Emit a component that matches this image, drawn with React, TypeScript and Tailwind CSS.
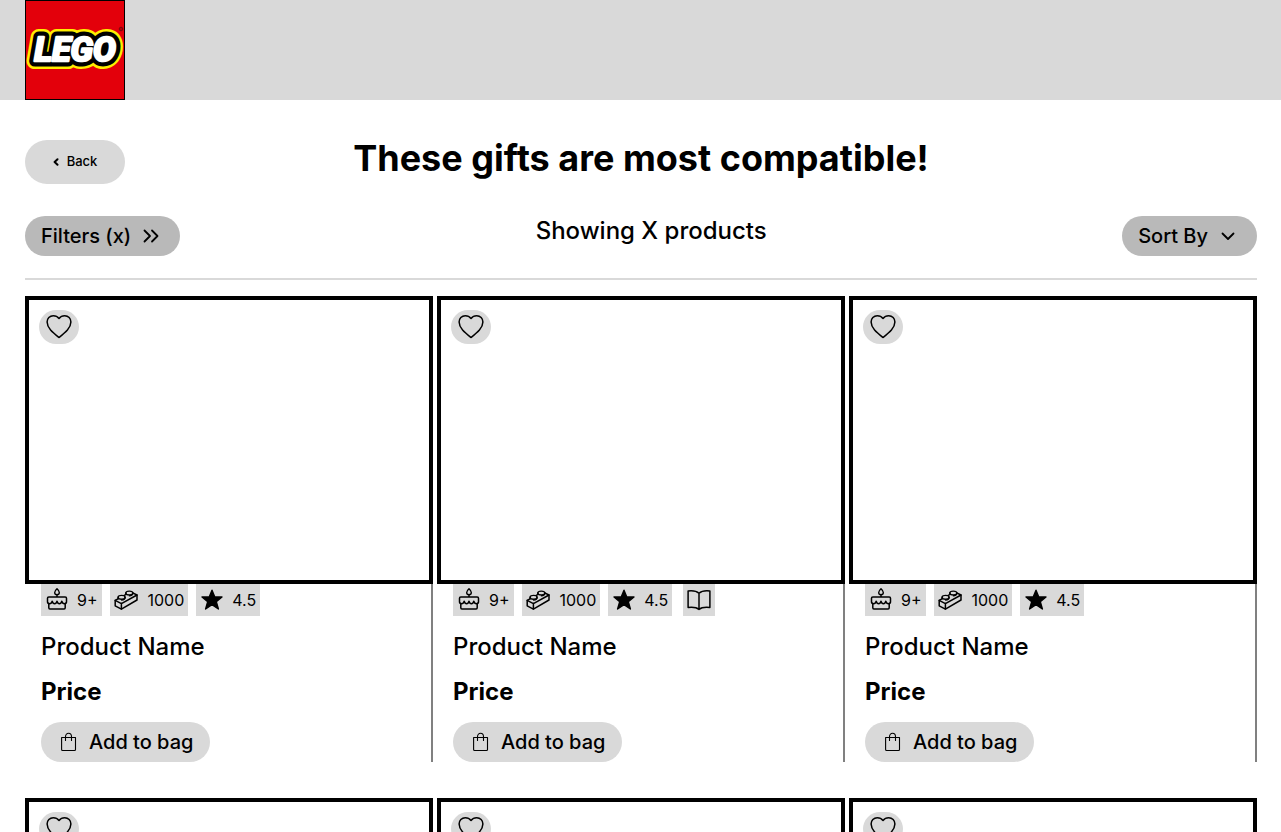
import React from "react";

type Product = { id: number; hasBook?: boolean };

const products: Product[] = [
  { id: 1 },
  { id: 2, hasBook: true },
  { id: 3 },
  { id: 4 },
  { id: 5, hasBook: true },
  { id: 6 },
];

function Logo() {
  const letters = {
    x: 50,
    y: 61,
    textAnchor: "middle" as const,
    strokeLinejoin: "round" as const,
    fontSize: 34,
    fontWeight: 700,
    fontStyle: "italic",
    fontFamily: "Roboto, sans-serif",
  };
  return (
    <svg viewBox="0 0 100 100" className="block size-[100px]" role="img" aria-label="LEGO">
      <rect width="100" height="100" fill="#000" />
      <rect x="1" y="1" width="98" height="98" fill="#e3000b" />
      <text {...letters} stroke="#ffed00" strokeWidth="16" fill="#ffed00">LEGO</text>
      <text {...letters} stroke="#000" strokeWidth="11" fill="#000">LEGO</text>
      <text {...letters} stroke="#fff" strokeWidth="2.6" fill="#fff">LEGO</text>
      <circle cx="96" cy="29" r="1.8" fill="none" stroke="#5c0508" strokeWidth="0.8" />
      <circle cx="96" cy="29" r="0.7" fill="#5c0508" />
    </svg>
  );
}

const line = {
  fill: "none",
  stroke: "currentColor",
  strokeLinecap: "round" as const,
  strokeLinejoin: "round" as const,
  "aria-hidden": true,
};

function HeartIcon() {
  return (
    <svg viewBox="0 0 26 24" className="h-6 w-[26px]" {...line} strokeWidth="1.5">
      <path d="M13 3.5C11.6 1.7 9.6 0.8 7.3 0.8C3.7 0.8 1.1 3.5 1.1 7.1C1.1 12.9 6.6 17.3 13 22.5C19.4 17.3 24.9 12.9 24.9 7.1C24.9 3.5 22.3 0.8 18.7 0.8C16.4 0.8 14.4 1.7 13 3.5Z" />
    </svg>
  );
}

function CakeIcon() {
  return (
    <svg viewBox="0 0 24 24" className="size-6" {...line} strokeWidth="1.5">
      <path d="M12 0.8C10.5 2.2 9.7 3.2 9.7 4.4C9.7 5.7 10.7 6.6 12 6.6S14.3 5.7 14.3 4.4C14.3 3.2 13.5 2.2 12 0.8Z" strokeWidth="1.4" />
      <path d="M12 6.6V9M3.8 9H20.2C21 9 21.5 9.5 21.5 10.3V13.8C21.5 15 20.7 15.7 19.5 15.7C18.2 15.7 17.3 15 16.8 13.2C16.3 15 15.5 15.7 14.4 15.7S12.5 15 12 13.2C11.5 15 10.7 15.7 9.6 15.7S7.7 15 7.2 13.2C6.7 15 5.8 15.7 4.5 15.7C3.3 15.7 2.5 15 2.5 13.8V10.3C2.5 9.5 3 9 3.8 9Z" />
      <path d="M3.8 15.6V19.8C3.8 20.5 4.2 20.9 4.9 20.9H19.1C19.8 20.9 20.2 20.5 20.2 19.8V15.6" />
    </svg>
  );
}

function BrickIcon() {
  return (
    <svg viewBox="0 0 26 24" className="h-6 w-[26px]" {...line} strokeWidth="1.5">
      <path d="M1.2 12.4L16.6 3.8L23 7V12L7.4 21.1L1.2 17.8Z" />
      <path d="M1.2 12.4L7.4 15.6L23 7M7.4 15.6V21.1" />
      <g className="fill-[#d9d9d9]" strokeWidth="1.4">
        <path d="M4.2 8.8V10.3C4.2 11.3 5.6 12.1 7.6 12.1S11 11.3 11 10.3V8.8" stroke="none" />
        <path d="M11.9 4.5V6C11.9 7 13.3 7.8 15.3 7.8S18.7 7 18.7 6V4.5" stroke="none" />
        <ellipse cx="7.6" cy="9.3" rx="3.5" ry="1.9" />
        <ellipse cx="15.3" cy="5" rx="3.5" ry="1.9" />
        <path d="M4.1 9.3V10.7M11.1 9.3C11.1 11.2 9.6 12 7.6 12M11.8 5V6.4M18.8 5C18.8 6.9 17.3 7.7 15.3 7.7" fill="none" />
      </g>
    </svg>
  );
}

function StarIcon() {
  return (
    <svg viewBox="0 0 24 24" className="size-6" fill="currentColor" aria-hidden>
      <path
        d="M12 2.2L14.8 9H22L16.3 13.6L18.4 21L12 16.7L5.6 21L7.7 13.6L2 9H9.2Z"
        stroke="currentColor"
        strokeWidth="1.4"
        strokeLinejoin="round"
      />
    </svg>
  );
}

function BookIcon() {
  return (
    <svg viewBox="0 0 24 24" className="size-6" {...line} strokeWidth="1.5">
      <path d="M12 5.2C9.7 3.1 5.4 2.4 1.1 2.9V19.4C5.4 18.9 9.7 19.4 12 21.4C14.3 19.4 18.6 18.9 22.9 19.4V2.9C18.6 2.4 14.3 3.1 12 5.2ZM12 5.2V21.4" />
    </svg>
  );
}

function BagIcon() {
  return (
    <svg viewBox="0 0 24 24" className="size-6" {...line} strokeWidth="1.1">
      <path d="M4.6 7.5H18.5V19.5C18.5 20 18.1 20.5 17.5 20.5H5.6C5 20.5 4.6 20 4.6 19.5Z" />
      <path d="M8.5 10.5V6.7C8.5 4.7 9.8 3.3 11.5 3.3S14.5 4.7 14.5 6.7V10.5" />
    </svg>
  );
}

function Chip({ icon, label }: { icon: React.ReactNode; label: string }) {
  return (
    <li className="flex h-8 items-center gap-2 bg-[#d9d9d9] px-1">
      {icon}
      <span>{label}</span>
    </li>
  );
}

function ProductCard({ product }: { product: Product }) {
  return (
    <article>
      <div className="h-72 border-4 border-black p-[10px]">
        <button
          type="button"
          aria-label="Add to wishlist"
          className="flex h-[34px] w-10 items-center justify-center rounded-full bg-[#d9d9d9]"
        >
          <HeartIcon />
        </button>
      </div>
      <div className="flex flex-col items-start gap-4 border-r-2 border-[#808080] pl-4">
        <ul className="flex gap-2 text-base">
          <Chip icon={<CakeIcon />} label="9+" />
          <Chip icon={<BrickIcon />} label="1000" />
          <Chip icon={<StarIcon />} label="4.5" />
          {product.hasBook && (
            <li className="ml-[3px] flex h-8 items-center bg-[#d9d9d9] px-1">
              <BookIcon />
            </li>
          )}
        </ul>
        <h2 className="text-2xl leading-[29px] font-medium">Product Name</h2>
        <p className="text-2xl leading-[29px] font-bold">Price</p>
        <button
          type="button"
          className="flex h-10 items-center gap-2 rounded-full bg-[#d9d9d9] pr-[17px] pl-4 text-xl font-medium"
        >
          <BagIcon />
          Add to bag
        </button>
      </div>
    </article>
  );
}

export default function App() {
  return (
    <div className="min-h-screen bg-white font-['Inter',sans-serif] text-black">
      <header className="bg-[#d9d9d9] pr-6 pl-[25px]">
        <a href="#" className="inline-block align-top">
          <Logo />
        </a>
      </header>
      <main className="pt-10 pr-6 pb-9 pl-[25px]">
        <div className="grid grid-cols-[1fr_auto_1fr] items-start">
          <a
            href="#"
            className="flex h-11 w-[100px] items-center justify-center gap-2 rounded-full bg-[#d9d9d9] text-[13px] font-medium"
          >
            <svg viewBox="0 0 6 8" className="h-2 w-[6px]" {...line} strokeWidth="2">
              <path d="M4.5 1.2L1.6 4L4.5 6.8" />
            </svg>
            Back
          </a>
          <h1 className="text-4xl leading-9 font-bold">These gifts are most compatible!</h1>
        </div>
        <div className="mt-8 flex items-start justify-between text-xl font-medium">
          <button
            type="button"
            className="flex h-10 items-center gap-2 rounded-full bg-[#b9b9b9] pr-[17px] pl-4"
          >
            Filters (x)
            <svg viewBox="0 0 24 24" className="size-6" {...line} strokeWidth="1.8">
              <path d="M5.5 6.5L11 12L5.5 17.5M13 6.5L18.5 12L13 17.5" />
            </svg>
          </button>
          <p className="text-2xl leading-[29px]">Showing X products</p>
          <button
            type="button"
            className="flex h-10 items-center gap-2 rounded-full bg-[#b9b9b9] pr-[17px] pl-4"
          >
            Sort By
            <svg viewBox="0 0 24 24" className="size-6" {...line} strokeWidth="1.8">
              <path d="M6.5 9.5L12 15L17.5 9.5" />
            </svg>
          </button>
        </div>
        <hr className="mt-[22px] mb-4 border-t-2 border-[#d9d9d9]" />
        <div className="grid grid-cols-3 gap-x-1 gap-y-9">
          {products.map((product) => (
            <ProductCard key={product.id} product={product} />
          ))}
        </div>
      </main>
    </div>
  );
}
